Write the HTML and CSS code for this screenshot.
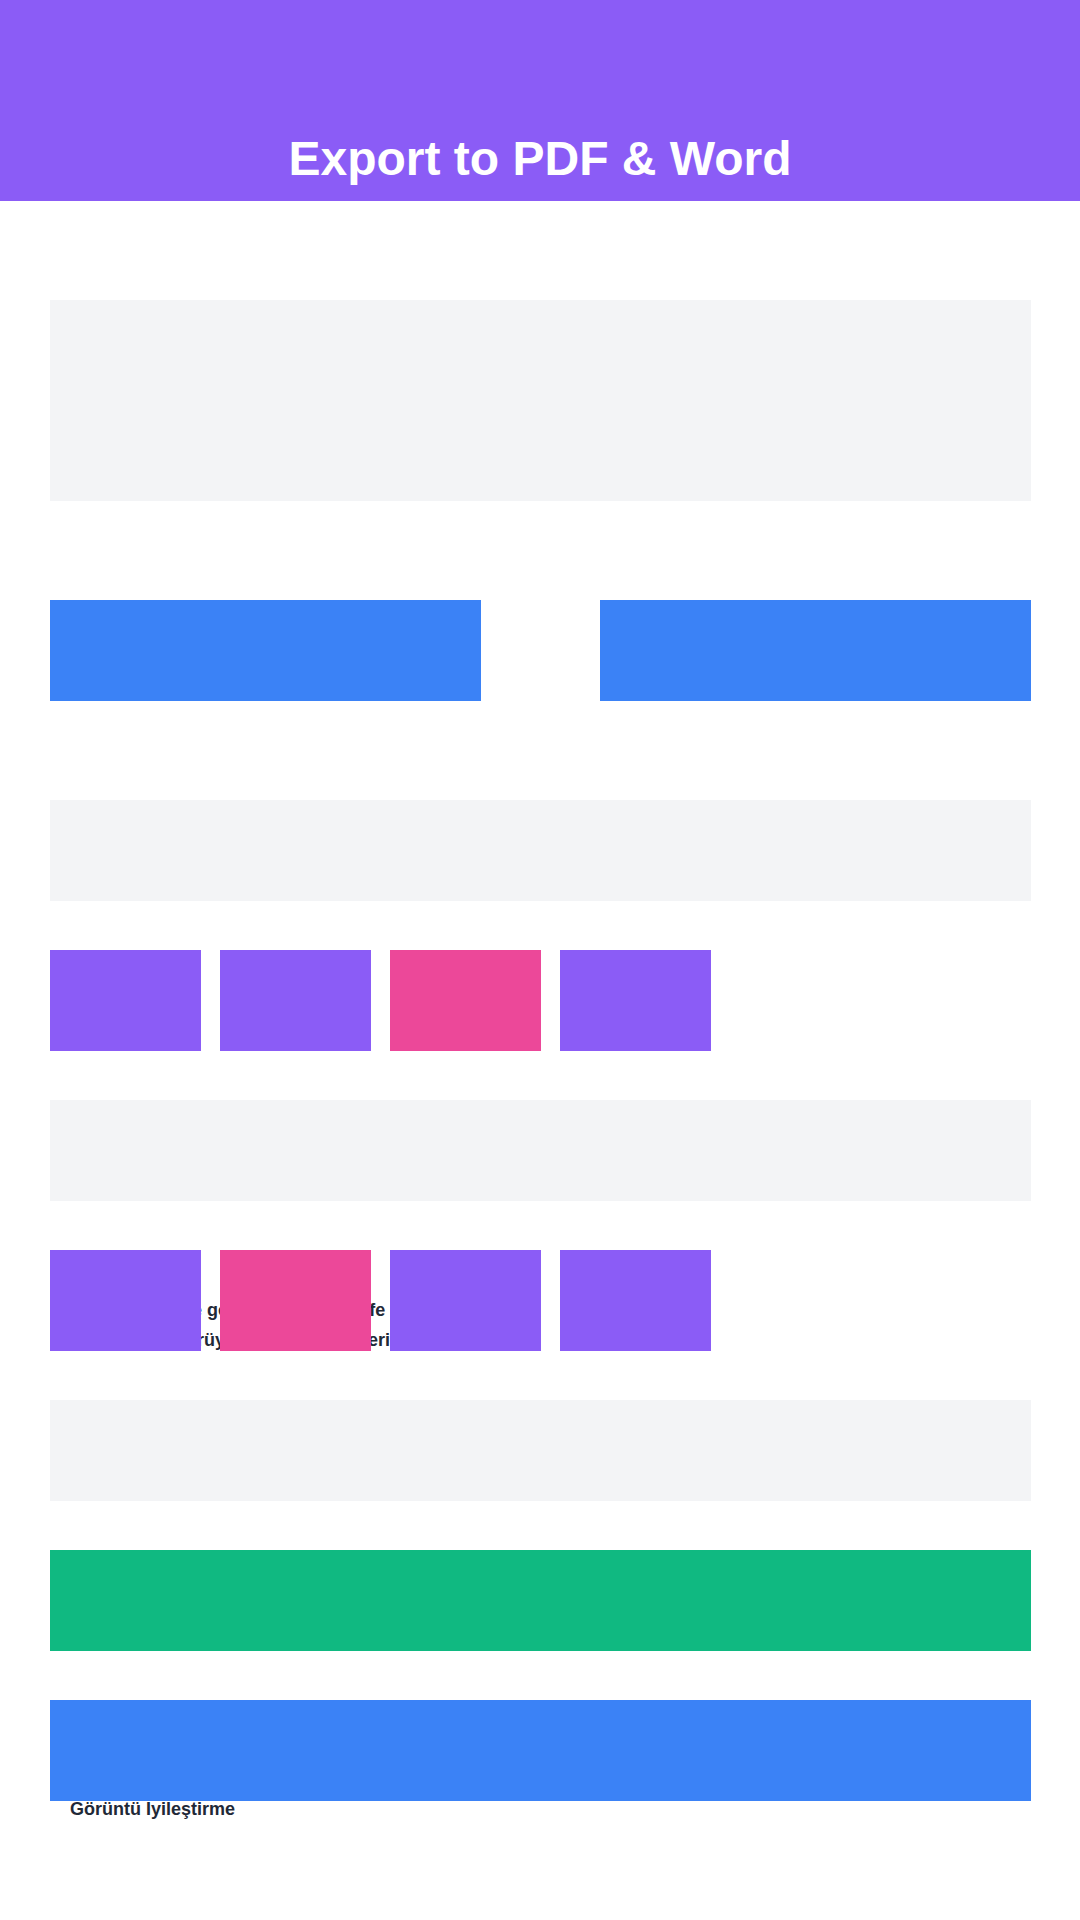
FILE: index.html
```html
<!DOCTYPE html>
<html lang="tr">
<head>
<meta charset="utf-8">
<title>Export to PDF &amp; Word</title>
<link rel="stylesheet" href="styles.css">
</head>
<body>
<header class="hero">
  <h1 class="hero-title">Export to PDF &amp; Word</h1>
</header>
<main class="page">
  <div class="block block-tall block-gray spaced"></div>
  <div class="pair spaced">
    <div class="block block-blue pair-item"></div>
    <div class="block block-blue pair-item"></div>
  </div>
  <div class="block block-gray"></div>
  <div class="tiles">
    <div class="tile tile-purple"></div>
    <div class="tile tile-purple"></div>
    <div class="tile tile-pink"></div>
    <div class="tile tile-purple"></div>
  </div>
  <div class="block block-gray"></div>
  <div class="stack stack-row">
    <p class="desc">Yapay zeka ile görsellerinizi mesafe ayırt etmeksizin<br>Eski, bulanık rüya gibi tüm resimleri netleştirin.</p>
    <div class="tiles">
      <div class="tile tile-purple"></div>
      <div class="tile tile-pink"></div>
      <div class="tile tile-purple"></div>
      <div class="tile tile-purple"></div>
    </div>
  </div>
  <div class="block block-gray"></div>
  <div class="block block-green"></div>
  <div class="stack">
    <h2 class="feature-title">Görüntü İyileştirme</h2>
    <div class="block block-blue"></div>
  </div>
</main>
</body>
</html>
```
FILE: styles.css
```css
html, body {
  margin: 0;
  padding: 0;
  background: #ffffff;
}
body {
  font-family: "Liberation Sans", Arial, sans-serif;
  color: #1f2937;
}
.hero {
  height: 201px;
  box-sizing: border-box;
  background: #8b5cf6;
  display: flex;
  align-items: flex-end;
  justify-content: center;
  padding-bottom: 14px;
}
.hero-title {
  margin: 0;
  font-size: 48px;
  line-height: 56px;
  font-weight: 700;
  color: #ffffff;
}
.page {
  display: flex;
  flex-direction: column;
  gap: 49px;
  padding: 99px 49px 0 50px;
}
.spaced {
  margin-bottom: 50px;
}
.block {
  height: 101px;
}
.block-tall {
  height: 201px;
}
.block-gray { background: #f3f4f6; }
.block-blue { background: #3b82f6; }
.block-green { background: #10b981; }
.pair {
  display: flex;
  justify-content: space-between;
}
.pair-item {
  width: 431px;
}
.tiles {
  display: flex;
  gap: 19px;
}
.tile {
  width: 151px;
  height: 101px;
}
.tile-purple { background: #8b5cf6; }
.tile-pink { background: #ec4899; }
.stack {
  display: grid;
}
.stack > * {
  grid-area: 1 / 1;
}
.stack-row {
  grid-template-rows: 101px;
  height: 101px;
}
.desc {
  margin: 0;
  padding: 45px 0 0 32px;
  font-size: 18px;
  line-height: 30px;
  font-weight: 700;
  white-space: nowrap;
  text-indent: -1px;
  color: #1f2937;
}
.feature-title {
  margin: 0;
  padding: 99px 0 0 20px;
  font-size: 18px;
  line-height: normal;
  font-weight: 700;
  color: #1f2937;
}
```
